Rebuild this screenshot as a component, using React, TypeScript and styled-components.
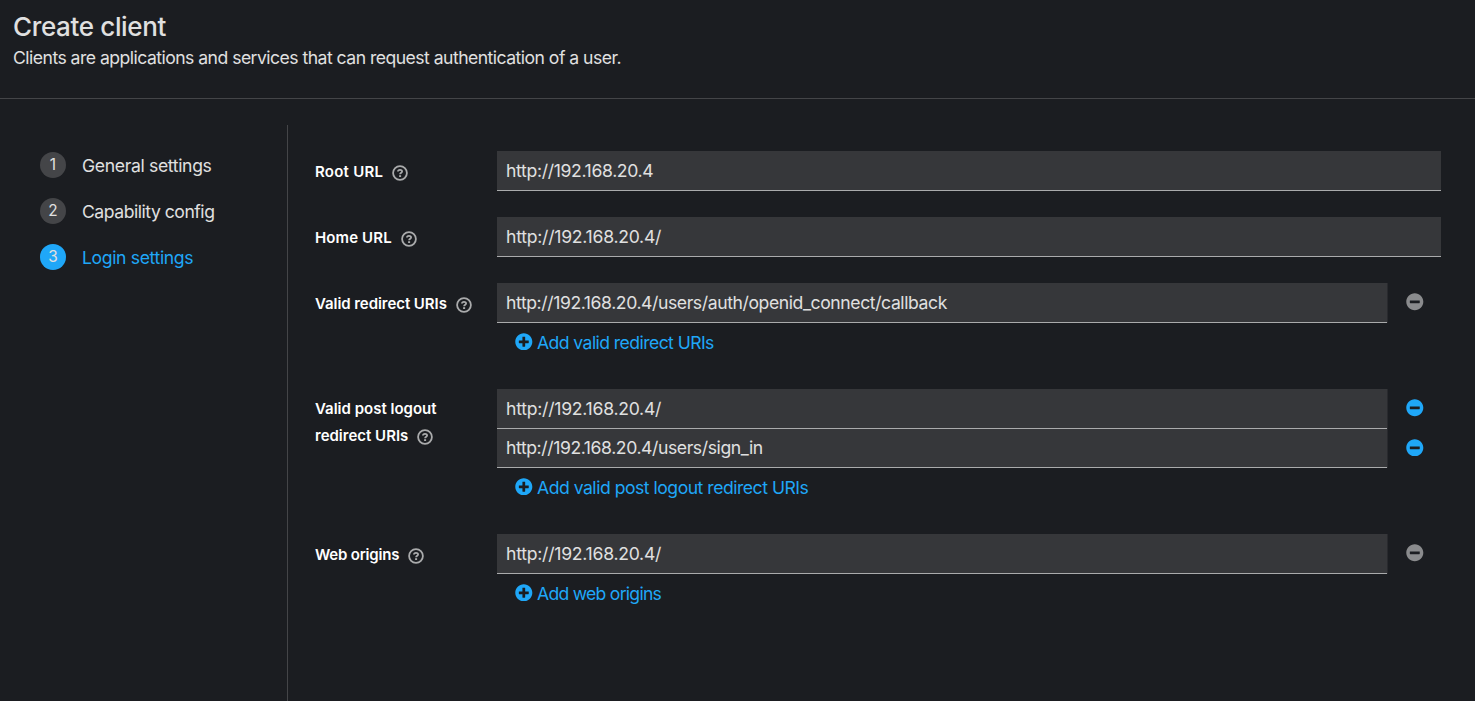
import React from "react";
import styled, { createGlobalStyle } from "styled-components";
import { FaPlusCircle, FaMinusCircle } from "react-icons/fa";

const GlobalStyle = createGlobalStyle`
  * { box-sizing: border-box; }
  body {
    margin: 0;
    background: #1b1d21;
    color: #e0e0e0;
    font-family: Inter, "Open Sans", sans-serif;
    font-size: 17.6px;
    overflow: hidden;
  }
`;

const Page = styled.div`
  display: flex;
  flex-direction: column;
  height: 701px;
`;

const Header = styled.header`
  height: 99px;
  padding: 10px 13px 0;
  border-bottom: 1px solid #444548;
`;

const Title = styled.h1`
  margin: 0;
  font-size: 26px;
  font-weight: 500;
  line-height: 34px;
  white-space: nowrap;
`;

const Subtitle = styled.p`
  margin: 0;
  line-height: 28px;
  white-space: nowrap;
`;

const Text = styled.span<{ $track?: number }>`
  letter-spacing: ${(p) => p.$track ?? 0}px;
`;

const Wizard = styled.div`
  display: flex;
  flex: 1;
  padding-top: 26px;
`;

const Nav = styled.nav`
  display: flex;
  flex-direction: column;
  gap: 20px;
  width: 288px;
  padding: 27px 0 0 40px;
  border-right: 1px solid #444548;
`;

const Step = styled.div<{ $current?: boolean }>`
  display: flex;
  align-items: center;
  gap: 16px;
  height: 26px;
  color: ${(p) => (p.$current ? "#1fa7f8" : "#e0e0e0")};
  white-space: nowrap;
`;

const StepNumber = styled.span<{ $current?: boolean }>`
  display: flex;
  align-items: center;
  justify-content: center;
  width: 26px;
  height: 26px;
  padding-bottom: 2px;
  border-radius: 50%;
  background: ${(p) => (p.$current ? "#1fa7f8" : "#444548")};
  color: #e0e0e0;
  font-size: 15.4px;
`;

const StepLabel = styled.span``;

const Form = styled.main`
  flex: 1;
  padding: 26px 34px 0 27px;
`;

const Group = styled.div<{ $height: number }>`
  display: flex;
  height: ${(p) => p.$height}px;
`;

const Label = styled.label<{ $multiline?: boolean }>`
  width: 182px;
  padding-top: ${(p) => (p.$multiline ? 6 : 7)}px;
  color: #fff;
  font-size: 15px;
  font-weight: 600;
  line-height: 27px;
  white-space: nowrap;
`;

const HelpMark = styled.svg`
  width: 16px;
  height: 16px;
  margin-left: 9px;
  vertical-align: -4px;
`;

const Fields = styled.div`
  flex: 1;
`;

const FieldRow = styled.div<{ $height?: number }>`
  display: flex;
  height: ${(p) => p.$height ?? 40}px;
`;

const Input = styled.div<{ $removable?: boolean }>`
  flex: 1;
  display: flex;
  align-items: center;
  padding: 0 9px 1px;
  background: #36373a;
  border-bottom: 1px solid #aaabac;
  box-shadow: ${(p) => (p.$removable ? "1px 0 #292a2e" : "none")};
  white-space: nowrap;
`;

const RemoveButton = styled.button<{ $disabled?: boolean }>`
  display: flex;
  align-items: center;
  justify-content: center;
  width: 54px;
  padding: 0 0 2px 2px;
  border: 0;
  background: none;
  color: ${(p) => (p.$disabled ? "#8a8b8d" : "#1fa7f8")};
  font-size: 17.6px;
`;

const AddButton = styled.button`
  display: flex;
  align-items: center;
  gap: 4.4px;
  height: 38px;
  padding: 0 0 0 18px;
  border: 0;
  background: none;
  color: #1fa7f8;
  font: inherit;
  white-space: nowrap;

  svg {
    margin-bottom: 1px;
  }
`;

const Help = () => (
  <HelpMark viewBox="0 0 16 16" fill="none" stroke="#aaabac">
    <circle cx="8" cy="8" r="6.9" strokeWidth="1.8" />
    <path d="M5.9 6.5C6 5.300 6.900 4.800 8 4.800c1.200 0 2.100.6 2.100 1.600C10.100 7.700 8.100 7.600 8.100 9.200" strokeWidth="1.800" />
    <path d="M7.100 11.100h2" strokeWidth="1.800" />
  </HelpMark>
);

type TrackedText = { text: string; track?: number };
type GroupData = {
  label: TrackedText[];
  height: number;
  values: (TrackedText & { height?: number })[];
  add?: TrackedText;
};

const steps: TrackedText[] = [
  { text: "General settings", track: -0.35 },
  { text: "Capability config", track: -0.48 },
  { text: "Login settings", track: -0.36 },
];

const groups: GroupData[] = [
  {
    label: [{ text: "Root URL", track: 0.25 }],
    height: 66,
    values: [{ text: "http://192.168.20.4", track: -0.34 }],
  },
  {
    label: [{ text: "Home URL", track: 0.12 }],
    height: 66,
    values: [{ text: "http://192.168.20.4/", track: -0.25 }],
  },
  {
    label: [{ text: "Valid redirect URIs", track: -0.06 }],
    height: 106,
    values: [{ text: "http://192.168.20.4/users/auth/openid_connect/callback", track: -0.41 }],
    add: { text: "Add valid redirect URIs", track: -0.57 },
  },
  {
    label: [{ text: "Valid post logout" }, { text: "redirect URIs" }],
    height: 145,
    values: [
      { text: "http://192.168.20.4/", track: -0.25 },
      { text: "http://192.168.20.4/users/sign_in", track: -0.41, height: 39 },
    ],
    add: { text: "Add valid post logout redirect URIs", track: -0.49 },
  },
  {
    label: [{ text: "Web origins", track: -0.2 }],
    height: 80,
    values: [{ text: "http://192.168.20.4/", track: -0.25 }],
    add: { text: "Add web origins", track: -0.73 },
  },
];

export default function App() {
  return (
    <Page>
      <GlobalStyle />
      <Header>
        <Title><Text $track={-0.35}>Create client</Text></Title>
        <Subtitle>
          <Text $track={-0.53}>Clients are applications and services that can request authentication of a user.</Text>
        </Subtitle>
      </Header>
      <Wizard>
        <Nav>
          {steps.map((s, i) => (
            <Step key={s.text} $current={i === 2}>
              <StepNumber $current={i === 2}>{i + 1}</StepNumber>
              <StepLabel><Text $track={s.track}>{s.text}</Text></StepLabel>
            </Step>
          ))}
        </Nav>
        <Form>
          {groups.map((g) => (
            <Group key={g.label[0].text} $height={g.height}>
              <Label $multiline={g.label.length > 1}>
                {g.label.map((l, i) => (
                  <React.Fragment key={l.text}>
                    {i > 0 && <br />}
                    <Text $track={l.track}>{l.text}</Text>
                  </React.Fragment>
                ))}
                <Help />
              </Label>
              <Fields>
                {g.values.map((v) => (
                  <FieldRow key={v.text} $height={v.height}>
                    <Input $removable={!!g.add}><Text $track={v.track}>{v.text}</Text></Input>
                    {g.add && (
                      <RemoveButton $disabled={g.values.length === 1}><FaMinusCircle /></RemoveButton>
                    )}
                  </FieldRow>
                ))}
                {g.add && (
                  <AddButton>
                    <FaPlusCircle size={17.6} />
                    <Text $track={g.add.track}>{g.add.text}</Text>
                  </AddButton>
                )}
              </Fields>
            </Group>
          ))}
        </Form>
      </Wizard>
    </Page>
  );
}
